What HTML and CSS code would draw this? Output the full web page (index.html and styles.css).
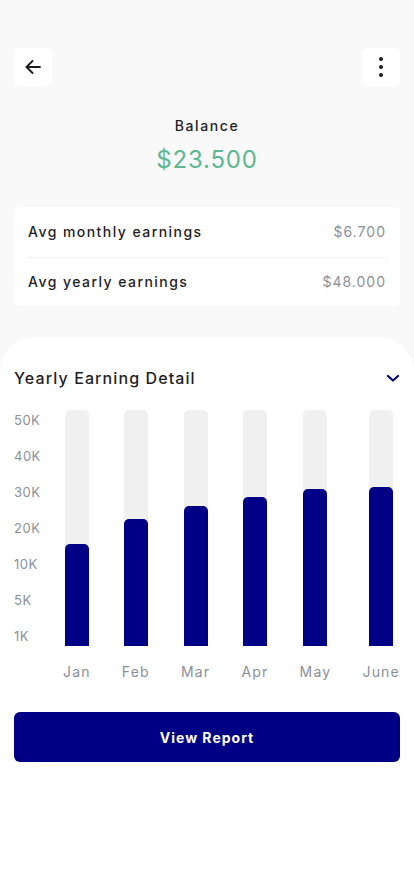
FILE: index.html
```html
<!DOCTYPE html>
<html>
<head>
<meta charset="utf-8">
<link rel="stylesheet" href="styles.css">
</head>
<body>
<div class="page">
  <header class="topbar">
    <button class="icon-btn" aria-label="Back">
      <svg width="20" height="20" viewBox="0 0 20 20"><path d="M17 10H3.5M9.5 4L3.5 10l6 6" fill="none" stroke="#1b1b1b" stroke-width="1.9" stroke-linecap="round" stroke-linejoin="round"/></svg>
    </button>
    <button class="icon-btn" aria-label="More">
      <svg width="6" height="20" viewBox="0 0 6 20"><circle cx="3" cy="2" r="2" fill="#1b1b1b"/><circle cx="3" cy="10" r="2" fill="#1b1b1b"/><circle cx="3" cy="18" r="2" fill="#1b1b1b"/></svg>
    </button>
  </header>

  <section class="balance">
    <div class="balance-label">Balance</div>
    <div class="balance-amount">$23.500</div>
  </section>

  <section class="card">
    <div class="card-row">
      <span class="row-label">Avg monthly earnings</span>
      <span class="row-value">$6.700</span>
    </div>
    <div class="card-row">
      <span class="row-label">Avg yearly earnings</span>
      <span class="row-value">$48.000</span>
    </div>
  </section>

  <section class="sheet">
    <div class="sheet-head">
      <h2 class="sheet-title">Yearly Earning Detail</h2>
      <svg class="chevron" width="14" height="10" viewBox="0 0 14 10"><path d="M2 3l5 4.5L12 3" fill="none" stroke="#000087" stroke-width="2.2" stroke-linecap="round" stroke-linejoin="round"/></svg>
    </div>

    <div class="chart">
      <div class="y-axis">
        <span>50K</span><span>40K</span><span>30K</span><span>20K</span><span>10K</span><span>5K</span><span>1K</span>
      </div>
      <div class="columns">
        <div class="col"><div class="track"><div class="fill" style="height:43.2%"></div></div><span class="month">Jan</span></div>
        <div class="col"><div class="track"><div class="fill" style="height:53.8%"></div></div><span class="month">Feb</span></div>
        <div class="col"><div class="track"><div class="fill" style="height:59.3%"></div></div><span class="month">Mar</span></div>
        <div class="col"><div class="track"><div class="fill" style="height:63.1%"></div></div><span class="month">Apr</span></div>
        <div class="col"><div class="track"><div class="fill" style="height:66.5%"></div></div><span class="month">May</span></div>
        <div class="col"><div class="track"><div class="fill" style="height:67.4%"></div></div><span class="month">June</span></div>
      </div>
    </div>

    <button class="report-btn">View Report</button>
  </section>
</div>
</body>
</html>
```

FILE: styles.css
```css
* { box-sizing: border-box; }
html, body { margin: 0; padding: 0; }
body {
  background: #f9f9f9;
  font-family: "Inter", "Open Sans", sans-serif;
  color: #1e1e24;
}
.page {
  width: 414px;
  min-height: 896px;
  display: flex;
  flex-direction: column;
}
.topbar {
  display: flex;
  justify-content: space-between;
  padding: 48px 14px 0;
}
.icon-btn {
  width: 38px;
  height: 38px;
  border: none;
  background: #ffffff;
  border-radius: 6px;
  display: flex;
  align-items: center;
  justify-content: center;
  padding: 0;
}
.balance {
  display: flex;
  flex-direction: column;
  align-items: center;
  padding-top: 30px;
}
.balance-label {
  font-size: 14px;
  line-height: 20px;
  font-weight: 500;
  letter-spacing: 1.6px;
  color: #222228;
}
.balance-amount {
  margin-top: 8px;
  font-size: 24px;
  line-height: 32px;
  letter-spacing: 0.8px;
  color: #5cb890;
}
.card {
  margin: 31px 14px 0;
  background: #ffffff;
  border-radius: 6px;
  padding: 0 14px;
}
.card-row {
  display: flex;
  justify-content: space-between;
  align-items: center;
  height: 49.5px;
}
.card-row + .card-row {
  border-top: 1px solid #f0f0f0;
}
.row-label {
  font-size: 14px;
  font-weight: 500;
  letter-spacing: 1.45px;
  color: #1e1e24;
}
.row-value {
  font-size: 14px;
  letter-spacing: 1px;
  color: #8b909a;
}
.sheet {
  flex: 1;
  margin-top: 31px;
  background: #ffffff;
  border-radius: 36px 36px 0 0;
  padding: 29px 14px 0;
}
.sheet-head {
  display: flex;
  justify-content: space-between;
  align-items: center;
  height: 24px;
}
.sheet-title {
  margin: 0;
  font-size: 16px;
  line-height: 24px;
  font-weight: 500;
  letter-spacing: 1.1px;
  color: #1e1e24;
}
.chart {
  display: flex;
  margin-top: 20px;
}
.y-axis {
  width: 49px;
  height: 236px;
  display: flex;
  flex-direction: column;
  justify-content: space-between;
  font-size: 13px;
  line-height: 20px;
  letter-spacing: 0.5px;
  color: #8b909a;
}
.columns {
  flex: 1;
  display: flex;
  justify-content: space-between;
}
.col {
  display: flex;
  flex-direction: column;
  align-items: center;
}
.track {
  width: 24px;
  height: 236px;
  background: #f0f0f0;
  border-radius: 5px 5px 0 0;
  display: flex;
  align-items: flex-end;
}
.fill {
  width: 100%;
  background: #000087;
  border-radius: 5px 5px 0 0;
}
.month {
  margin-top: 16px;
  font-size: 14px;
  line-height: 20px;
  letter-spacing: 1.2px;
  color: #8b909a;
}
.report-btn {
  display: block;
  width: 100%;
  height: 50px;
  margin-top: 30px;
  border: none;
  border-radius: 6px;
  background: #000087;
  color: #ffffff;
  font-family: "Inter", "Open Sans", sans-serif;
  font-size: 14px;
  font-weight: 700;
  letter-spacing: 1px;
}
```
